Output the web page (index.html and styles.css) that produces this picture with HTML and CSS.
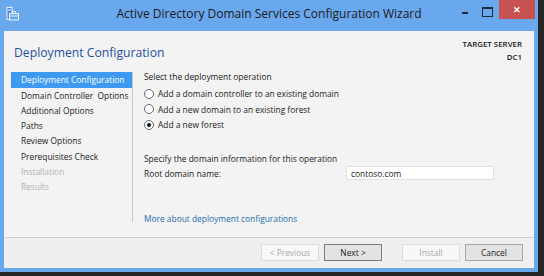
FILE: index.html
```html
<!DOCTYPE html>
<html lang="en">
  <head>
    <meta charset="UTF-8" />
    <link rel="stylesheet" href="styles.css">
    <title>Active Directory Domain Services Configuration Wizard</title>
  </head>
  <body>
    <div class="window">
      <div class="titlebar">
        <svg class="appicon" width="13" height="14" viewBox="0 0 13 14">
          <rect x="1" y="0.5" width="5" height="12" fill="#4a8ad8" stroke="#e8f2ff" stroke-width="1" />
          <line x1="2" y1="3" x2="5" y2="3" stroke="#e8f2ff" />
          <rect x="3.5" y="6.5" width="9" height="6.5" fill="#6aa8ee" stroke="#e8f2ff" stroke-width="1" />
          <rect x="6.5" y="4.5" width="3" height="2" fill="none" stroke="#e8f2ff" stroke-width="1" />
          <line x1="4" y1="9" x2="12" y2="9" stroke="#e8f2ff" />
        </svg>
        <div class="title">Active Directory Domain Services Configuration Wizard</div>
        <div class="controls">
          <span class="ctl min"></span>
          <span class="ctl max"></span>
          <span class="ctl close">&#x2715;</span>
        </div>
      </div>

      <div class="client">
        <div class="header">
          <h1>Deployment Configuration</h1>
          <div class="target">
            <div>TARGET SERVER</div>
            <div>DC1</div>
          </div>
        </div>

        <div class="main">
          <ul class="nav">
            <li class="active">Deployment Configuration</li>
            <li>Domain Controller&nbsp; Options</li>
            <li>Additional Options</li>
            <li>Paths</li>
            <li>Review Options</li>
            <li>Prerequisites Check</li>
            <li class="off">Installation</li>
            <li class="off">Results</li>
          </ul>

          <div class="pane">
            <div class="label">Select the deployment operation</div>
            <label class="opt"><input type="radio" name="op" /> Add a domain controller to an existing domain</label>
            <label class="opt"><input type="radio" name="op" /> Add a new domain to an existing forest</label>
            <label class="opt"><input type="radio" name="op" checked /> Add a new forest</label>

            <div class="label spaced">Specify the domain information for this operation</div>
            <div class="field">
              <span>Root domain name:</span>
              <input type="text" value="contoso.com" />
            </div>

            <a class="more" href="#">More about deployment configurations</a>
          </div>
        </div>

        <div class="footer">
          <button class="btn" disabled>&lt; Previous</button>
          <button class="btn default">Next &gt;</button>
          <button class="btn gap" disabled>Install</button>
          <button class="btn">Cancel</button>
        </div>
      </div>
    </div>
  </body>
</html>
```

FILE: styles.css
```css
* {
  margin: 0;
  padding: 0;
  box-sizing: border-box;
}
body {
  width: 544px;
  height: 276px;
  background: #262626;
  font-family: "Open Sans", "Noto Sans", sans-serif;
  overflow: hidden;
}
.window {
  width: 538px;
  height: 272px;
  background: #6aa8ee;
  padding: 0 4px 4px 4px;
  display: flex;
  flex-direction: column;
}
.titlebar {
  height: 31px;
  display: flex;
  align-items: flex-start;
  position: relative;
}
.appicon {
  margin: 7px 0 0 2px;
}
.title {
  position: absolute;
  left: 0;
  right: 0;
  top: 5px;
  text-align: center;
  font-size: 12px;
  color: #1a1a1a;
}
.controls {
  margin-left: auto;
  display: flex;
  height: 19px;
  margin-right: -1px;
}
.ctl {
  width: 20px;
  height: 19px;
  position: relative;
}
.min::after {
  content: "";
  position: absolute;
  left: 4px;
  top: 12px;
  width: 6px;
  height: 2px;
  background: #1e2a3a;
}
.max::after {
  content: "";
  position: absolute;
  left: 4px;
  top: 7px;
  width: 9px;
  height: 7px;
  border: 1px solid #1e2a3a;
  border-top-width: 2px;
}
.close {
  width: 36px;
  margin-left: 1px;
  background: #c75050;
  color: #fff;
  font-size: 9px;
  font-weight: bold;
  text-align: center;
  line-height: 19px;
}
.client {
  flex: 1;
  background: #f3f3f3;
  display: flex;
  flex-direction: column;
}
.header {
  height: 38px;
  display: flex;
  justify-content: space-between;
  padding: 11px 12px 0 10px;
}
.header h1 {
  font-size: 12.2px;
  font-weight: normal;
  color: #1f4f9e;
  margin-top: 2px;
}
.target {
  text-align: right;
  font-size: 7.9px;
  font-weight: 600;
  color: #1a1a1a;
  line-height: 13px;
  margin-top: -4px;
}
.main {
  flex: 1;
  display: flex;
}
.nav {
  list-style: none;
  width: 129px;
  margin-top: 3px;
  padding-left: 7px;
  border-right: 1px solid #c8c8c8;
  height: 150px;
  font-size: 8.4px;
  color: #1a1a1a;
}
.nav li {
  height: 15.15px;
  line-height: 15px;
  padding-left: 10px;
  white-space: nowrap;
}
.nav li.active {
  height: 16px;
  background: #3d9af0;
  color: #fff;
}
.nav li.off {
  color: #b0b0b0;
}
.pane {
  flex: 1;
  padding-left: 11px;
  font-size: 8.4px;
  color: #1a1a1a;
  display: flex;
  flex-direction: column;
}
.label {
  line-height: 15px;
  margin-bottom: 2px;
}
.label.spaced {
  margin-top: 18px;
  margin-bottom: 0;
}
.opt {
  display: flex;
  align-items: center;
  height: 15.5px;
}
.opt input {
  appearance: none;
  width: 10px;
  height: 10px;
  border: 1px solid #6a6a6a;
  border-radius: 50%;
  background: #fff;
  margin-right: 4px;
  display: grid;
  place-items: center;
}
.opt input:checked::after {
  content: "";
  width: 4px;
  height: 4px;
  border-radius: 50%;
  background: #111;
}
.field {
  display: flex;
  align-items: center;
  height: 15px;
}
.field span {
  width: 202px;
}
.field input {
  width: 148px;
  height: 14px;
  border: 1px solid #e0e0e0;
  background: #fff;
  font-family: inherit;
  font-size: 8.4px;
  color: #1a1a1a;
  padding-left: 4px;
}
.more {
  margin-top: 32px;
  color: #1b6db0;
  text-decoration: none;
}
.footer {
  height: 31px;
  border-top: 1px solid #cfcfcf;
  background: #efefef;
  display: flex;
  justify-content: flex-end;
  align-items: flex-start;
  padding: 6px 11px 0 0;
  gap: 5px;
}
.btn {
  width: 58px;
  height: 17px;
  font-family: inherit;
  font-size: 8.4px;
  color: #1a1a1a;
  background: #e3e3e3;
  border: 1px solid #a8a8a8;
}
.btn.default {
  border-color: #7a7a7a;
}
.btn:disabled {
  background: #f8f8f8;
  border-color: #dcdcdc;
  color: #a8a8a8;
}
.btn.gap {
  margin-left: 15px;
}
```
